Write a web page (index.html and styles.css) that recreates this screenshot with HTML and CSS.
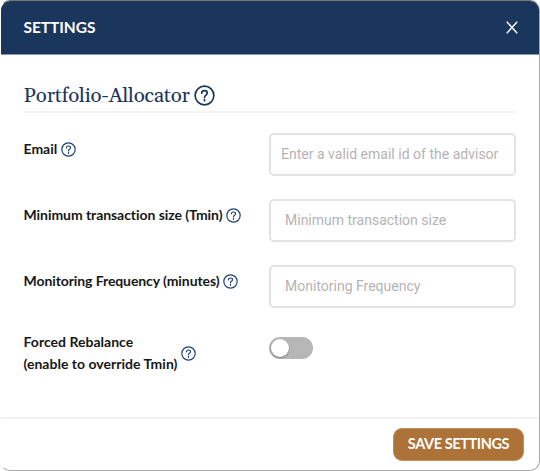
FILE: index.html
```html
<!DOCTYPE html>
<html lang="en">
<head>
<meta charset="utf-8">
<title>Settings</title>
<link rel="stylesheet" href="styles.css">
</head>
<body>
<svg class="defs" width="0" height="0">
  <symbol id="help" viewBox="0 0 20 20">
    <circle cx="10" cy="10" r="8.9"/>
    <path d="M7.3 7.8C7.3 6.2 8.5 5.3 10 5.3s2.7 1 2.7 2.4c0 1.900-2.700 2-2.700 4.100"/>
    <path d="M10 13.900v1.200"/>
  </symbol>
</svg>
<main class="dialog">
  <header class="header">
    <span class="title">SETTINGS</span>
    <svg class="close" viewBox="0 0 12 13"><path d="M.8.8l10.400 11.400M11.200.8L.8 12.200"/></svg>
  </header>
  <section class="content">
    <h1 class="heading"><span>Portfolio-Allocator</span><svg class="help big"><use href="#help"/></svg></h1>
    <div class="row">
      <label class="label"><span class="l-email">Email</span><svg class="help"><use href="#help"/></svg></label>
      <input class="input email" placeholder="Enter a valid email id of the advisor">
    </div>
    <div class="row">
      <label class="label"><span class="l-min">Minimum transaction size (Tmin)</span><svg class="help"><use href="#help"/></svg></label>
      <input class="input" placeholder="Minimum transaction size">
    </div>
    <div class="row">
      <label class="label"><span class="l-freq">Monitoring Frequency (minutes)</span><svg class="help"><use href="#help"/></svg></label>
      <input class="input" placeholder="Monitoring Frequency">
    </div>
    <div class="row last">
      <label class="label"><span class="l-force">Forced Rebalance<br>(enable to override Tmin)</span><svg class="help"><use href="#help"/></svg></label>
      <span class="toggle"><span class="knob"></span></span>
    </div>
  </section>
  <footer class="footer"><button class="save">SAVE SETTINGS</button></footer>
</main>
</body>
</html>
```
FILE: styles.css
```css
* { box-sizing: border-box; }
body { margin: 0; height: 471px; overflow: hidden; background: #fff; font-family: Lato, sans-serif; }
.defs { display: block; width: 0; height: 0; }
.dialog { width: 540px; height: 471px; border: 1px solid #a9a9a9; border-left-color: #fff; border-top-color: #77766f; border-radius: 10px; overflow: hidden; display: flex; flex-direction: column; background: #fff; }
.header { height: 54px; flex: none; background: #1a365d; border-bottom: 1px solid #8496b2; display: flex; align-items: center; justify-content: space-between; padding: 0 21.500px 0 22.500px; color: #fff; }
.title { font-size: 15.500px; line-height: 20px; padding-bottom: 2px; font-weight: 700; letter-spacing: -.05px; }
.close { width: 12px; height: 13px; fill: none; stroke: #fff; stroke-width: 1.400; }
.content { flex: 1; padding: 24px 23px 0 22.500px; }
.heading { margin: 0 0 20px; height: 34px; border-bottom: 2px solid #f3f3f3; display: flex; align-items: center; gap: 5px; font: 400 20.500px/32px Gelasio, Georgia, "Liberation Serif", serif; color: #1a365d; }
.heading span { width: 165px; white-space: nowrap; letter-spacing: -.2px; padding-top: 2px; }
.help { width: 15px; height: 15px; flex: none; fill: none; stroke: #1f4279; stroke-width: 1.600; stroke-linecap: round; }
.big { width: 21px; height: 21px; stroke: #1a365d; }
.row { display: grid; grid-template-columns: 245.500px 247px; height: 66px; align-items: start; }
.label { display: flex; align-items: center; height: 32px; color: #171717; font-size: 14px; line-height: 22px; font-weight: 700; white-space: nowrap; }
.label .help { margin-left: 4px; }
.l-email { width: 33px; }
.l-min { width: 198px; letter-spacing: -.06px; }
.l-freq { width: 195.500px; letter-spacing: -.09px; }
.l-force { width: 153.500px; letter-spacing: .02px; }
.input { width: 247px; height: 43px; border: 2px solid #e3e3e3; border-radius: 5px; padding: 0 14px 2px; font: 400 14px Roboto, sans-serif; color: #333; outline: none; background: #fff; }
.email { padding: 0 10px 2px; letter-spacing: .01px; }
.input::placeholder { color: #b4b4b4; opacity: 1; }
.last .label { height: 44px; }
.toggle { width: 44px; height: 22px; margin-top: 6px; border-radius: 11px; background: #b7b7b7; padding: 2px; }
.knob { display: block; width: 18px; height: 18px; border-radius: 50%; background: #fff; box-shadow: 0 1px 2px #0005; }
.footer { height: 53px; flex: none; border-top: 2px solid #f3f3f3; display: flex; align-items: center; justify-content: flex-end; padding-right: 15px; }
.save { width: 131px; height: 33px; border: 1px solid #c08f5d; border-radius: 9px; padding: 0 0 3px; background: #ad7237; color: #fff; font: 700 14.500px Lato, sans-serif; letter-spacing: -.4px; white-space: nowrap; }
```
